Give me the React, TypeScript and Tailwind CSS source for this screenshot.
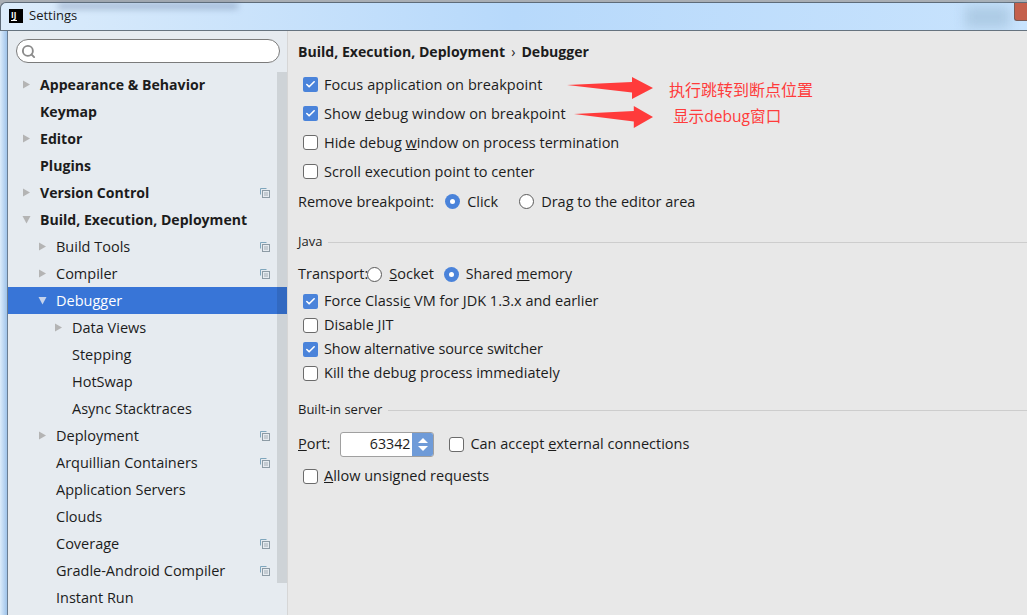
import { Check, Search } from "lucide-react";

type NavItem = { label: string; level: 0 | 1 | 2; arrow?: "right" | "down"; stack?: boolean; selected?: boolean };

const nav: NavItem[] = [
  { label: "Appearance & Behavior", level: 0, arrow: "right" },
  { label: "Keymap", level: 0 },
  { label: "Editor", level: 0, arrow: "right" },
  { label: "Plugins", level: 0 },
  { label: "Version Control", level: 0, arrow: "right", stack: true },
  { label: "Build, Execution, Deployment", level: 0, arrow: "down" },
  { label: "Build Tools", level: 1, arrow: "right", stack: true },
  { label: "Compiler", level: 1, arrow: "right", stack: true },
  { label: "Debugger", level: 1, arrow: "down", selected: true },
  { label: "Data Views", level: 2, arrow: "right" },
  { label: "Stepping", level: 2 },
  { label: "HotSwap", level: 2 },
  { label: "Async Stacktraces", level: 2 },
  { label: "Deployment", level: 1, arrow: "right", stack: true },
  { label: "Arquillian Containers", level: 1, stack: true },
  { label: "Application Servers", level: 1 },
  { label: "Clouds", level: 1 },
  { label: "Coverage", level: 1, stack: true },
  { label: "Gradle-Android Compiler", level: 1, stack: true },
  { label: "Instant Run", level: 1 },
];

function StackIcon() {
  return (
    <svg width="10" height="10" viewBox="0 0 10 10" fill="none" className="shrink-0">
      <path d="M0.5 6.5V0.5H6.5" stroke="#7fa6bd" />
      <rect x="2.5" y="2.5" width="7" height="7" fill="#e6ebf0" stroke="#8d9ba5" />
      <path d="M4 5h4M4 7h4" stroke="#a3adb5" />
    </svg>
  );
}

function Arrow({ dir, selected }: { dir: "right" | "down"; selected?: boolean }) {
  const color = selected ? "#c5d3ec" : "#b4b4b4";
  return (
    <svg width="9" height="9" viewBox="0 0 9 9" className="shrink-0 -ml-px">
      {dir === "right" ? <path d="M1 0.5L8 4.5L1 8.5Z" fill={color} /> : <path d="M0.5 1H8.5L4.5 8.5Z" fill={color} />}
    </svg>
  );
}

function NavRow({ item }: { item: NavItem }) {
  const pad = item.level === 0 ? "pl-[15px]" : item.level === 1 ? "pl-[31px]" : "pl-[47px]";
  return (
    <div
      className={`h-[27px] flex items-center pr-[17px] ${pad} ${item.selected ? "bg-[#3875d7] text-white" : "text-[#1c1c1c]"} ${item.level === 0 ? "font-bold text-[14.1px]" : "text-[14.5px]"}`}
    >
      <span className="w-[17px] flex shrink-0">{item.arrow && <Arrow dir={item.arrow} selected={item.selected} />}</span>
      <span className="flex-1 whitespace-nowrap">{item.label}</span>
      {item.stack && <StackIcon />}
    </div>
  );
}

function CheckBox({ checked }: { checked?: boolean }) {
  return checked ? (
    <span className="w-[15px] h-[15px] rounded-[2px] bg-[#4a83da] flex items-center justify-center shrink-0">
      <Check size={11} strokeWidth={3.5} className="text-white" />
    </span>
  ) : (
    <span className="w-[15px] h-[15px] rounded-[3px] bg-white border border-[#6b6b6b] shrink-0" />
  );
}

function Radio({ checked }: { checked?: boolean }) {
  return checked ? (
    <span className="w-[15px] h-[15px] rounded-full bg-[#4a83da] flex items-center justify-center shrink-0">
      <span className="w-[5px] h-[5px] rounded-full bg-white" />
    </span>
  ) : (
    <span className="w-[15px] h-[15px] rounded-full bg-white border border-[#5a5a5a] shrink-0" />
  );
}

function CheckRow({ checked, h, children, tracking = "" }: { checked?: boolean; h: string; children: React.ReactNode; tracking?: string }) {
  return (
    <div className={`flex items-center pl-[5px] gap-[6px] ${h}`}>
      <CheckBox checked={checked} />
      <span className={`whitespace-nowrap ${tracking}`}>{children}</span>
    </div>
  );
}

function GroupTitle({ label }: { label: string }) {
  return (
    <div className="flex items-center gap-[6px] h-5 text-[13px]">
      <span>{label}</span>
      <span className="flex-1 h-px bg-[#cdcdcd]" />
    </div>
  );
}

function RedArrow() {
  return (
    <svg width="86" height="23" viewBox="0 0 86 23">
      <path d="M0 8L65 5V0L86 11L65 22V15.5Z" fill="#ff3b3b" />
    </svg>
  );
}

export default function App() {
  return (
    <div
      className="relative w-[1027px] h-[615px] overflow-hidden bg-[#e8e8e8] text-[#1c1c1c]"
      style={{ fontFamily: '"Open Sans", "Noto Sans CJK SC", sans-serif' }}
    >
      {/* title bar */}
      <div className="relative h-[31px] overflow-hidden border-b border-[#66737f] bg-[#a9aeb4]">
        <div className="absolute inset-x-0 top-[2px] bottom-0 rounded-tl-[6px] border-t border-l border-[#5e6b78] bg-gradient-to-r from-[#dcecfb] via-[#b7d9fb] to-[#c8e3fd]" />
        <div className="absolute left-[58px] top-[3px] w-[180px] h-[6px] blur-[3px] bg-[#5f7396]/40" />
        <div className="absolute left-[965px] top-[6px] w-[45px] h-[22px] blur-[6px] bg-[#9dbcd6]/60" />
        <div className="absolute right-0 top-[3px] w-[13px] h-[18px] rounded-bl-[3px] border-l border-b border-[#7a5a55] bg-[#c4604c]" />
        <div className="relative h-full flex items-center pl-[9px] gap-[6px] pt-[2px]">
          <span className="w-[14px] h-[14px] bg-black text-white text-[8px] font-bold leading-[8px] pl-[2px] pt-[2px] flex flex-col">
            IJ
            <span className="w-[6px] h-px bg-white mt-px" />
          </span>
          <span className="text-[13px] text-[#1a1a1a]">Settings</span>
        </div>
      </div>

      <div className="flex h-[584px]">
        {/* left sidebar */}
        <div className="w-[8px] bg-gradient-to-r from-[#dcecfb] to-[#9fc3ea] border-r border-[#6a7d92]" />
        <div className="relative w-[280px] bg-[#e6ebf0] border-r border-[#d6d6d6]">
          <div className="h-[40px] pt-[8px] pl-[8px]">
            <div className="w-[264px] h-[24px] rounded-full bg-white border border-[#7b7b7b] flex items-center pl-[4px]">
              <Search size={15} strokeWidth={3} className="text-[#8a8a8a]" />
            </div>
          </div>
          {nav.map((item) => (
            <NavRow key={item.label} item={item} />
          ))}
          <div className="absolute right-0 top-[41px] w-[10px] h-[511px] bg-black/10" />
        </div>

        {/* main panel */}
        <div className="flex-1 min-w-0 pl-[10px] text-[14.5px]">
          <div className="h-[39px] flex items-center font-bold text-[14.1px] pt-[2px]">
            Build, Execution, Deployment<span className="font-normal px-[6px]">›</span>Debugger
          </div>
          <CheckRow checked h="h-[29px]" tracking="tracking-[0.07px]">Focus application on breakpoint</CheckRow>
          <CheckRow checked h="h-[29px]" tracking="tracking-[0.1px]">
            Show <u>d</u>ebug window on breakpoint
          </CheckRow>
          <CheckRow h="h-[29px]">
            Hide debug <u>w</u>indow on process termination
          </CheckRow>
          <CheckRow h="h-[29px]">Scroll execution point to center</CheckRow>
          <div className="h-[31px] flex items-center">
            <span>Remove breakpoint:</span>
            <span className="ml-[11px] mr-[7px] flex"><Radio checked /></span>
            <span>Click</span>
            <span className="ml-[21px] mr-[7px] flex"><Radio /></span>
            <span>Drag to the editor area</span>
          </div>
          <div className="h-[15px]" />
          <GroupTitle label="Java" />
          <div className="h-[10px]" />
          <div className="h-[24px] flex items-center">
            <span>Transport:</span>
            <span className="-ml-px mr-[7px] flex"><Radio /></span>
            <span><u>S</u>ocket</span>
            <span className="ml-[10px] mr-[7px] flex"><Radio checked /></span>
            <span className="text-[14.2px]">Shared <u>m</u>emory</span>
          </div>
          <div className="h-[3px]" />
          <CheckRow checked h="h-[24px]">
            Force Classi<u>c</u> VM for JDK 1.3.x and earlier
          </CheckRow>
          <CheckRow h="h-[24px]">Disable JIT</CheckRow>
          <CheckRow checked h="h-[24px]" tracking="tracking-[-0.12px]">Show alternative source switcher</CheckRow>
          <CheckRow h="h-[24px]">Kill the debug process immediately</CheckRow>
          <div className="h-[15px]" />
          <GroupTitle label="Built-in server" />
          <div className="h-[10px]" />
          <div className="h-[28px] flex items-center">
            <span><u>P</u>ort:</span>
            <div className="ml-[10px] w-[94px] h-[25px] rounded-[3px] border border-[#a0a0a0] bg-white flex items-center overflow-hidden">
              <span className="flex-1 text-right pr-[2px] text-[14.2px]">63342</span>
              <span className="w-[21px] h-full bg-[#6f9bd8] flex flex-col items-center justify-center gap-[3px]">
                <span className="w-0 h-0 border-x-[5px] border-x-transparent border-b-[5px] border-b-white" />
                <span className="w-0 h-0 border-x-[5px] border-x-transparent border-t-[5px] border-t-white" />
              </span>
            </div>
            <span className="ml-[15px] mr-[6px] flex"><CheckBox /></span>
            <span>Can accept <u>e</u>xternal connections</span>
          </div>
          <div className="h-[9px]" />
          <CheckRow h="h-[18px]">
            <u>A</u>llow unsigned requests
          </CheckRow>
        </div>
      </div>

      {/* annotations on top of the screenshot */}
      <div className="absolute left-[567px] top-[77px]"><RedArrow /></div>
      <div className="absolute left-[574px] top-[106px] scale-x-[0.92] origin-left"><RedArrow /></div>
      <span className="absolute left-[669px] top-[79px] text-[16px] leading-[22px] text-[#ff3b3b] whitespace-nowrap">执行跳转到断点位置</span>
      <span className="absolute left-[673px] top-[105px] text-[15.6px] leading-[22px] text-[#ff3b3b] whitespace-nowrap">显示debug窗口</span>
    </div>
  );
}
